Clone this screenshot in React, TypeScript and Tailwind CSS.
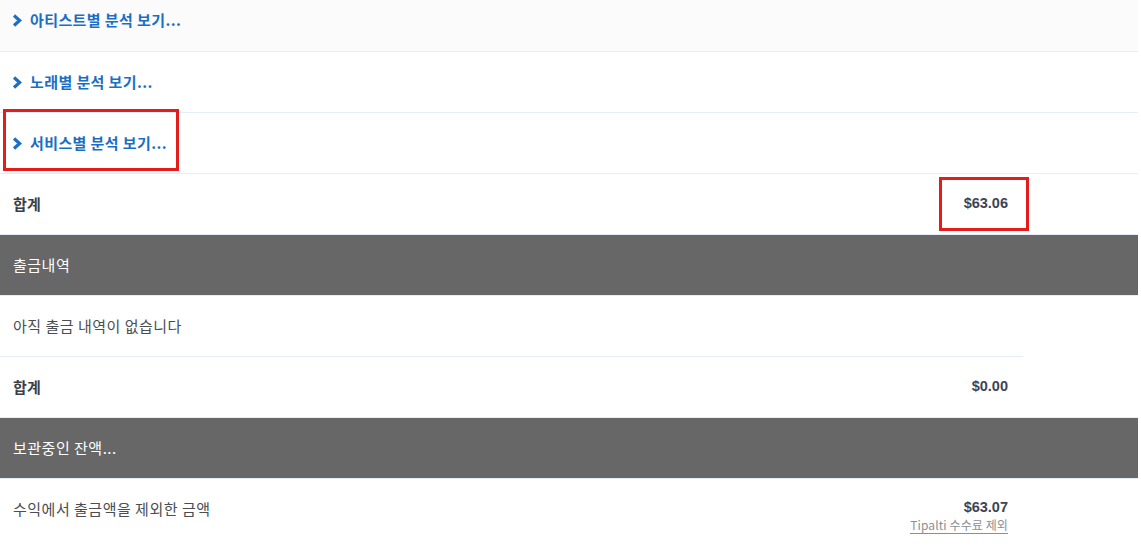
const kr = "font-['Noto_Sans_CJK_KR','Noto_Sans',sans-serif]";
const num = "font-['Liberation_Sans',Arial,sans-serif]";

function Chevron() {
  return (
    <svg width="10" height="13" viewBox="0 0 10 13" className="shrink-0">
      <path d="M2 1.5 L7.6 6.5 L2 11.5" fill="none" stroke="#1a6fc4" strokeWidth="3.2" strokeLinejoin="miter" />
    </svg>
  );
}

function LinkRow({ label, first }: { label: string; first?: boolean }) {
  return (
    <div
      className={
        "flex items-center border-b border-[#e4eef8] pl-[12px] gap-[8px] " +
        (first ? "h-[52px] pb-[11px] bg-[#fbfbfb]" : "h-[61px]")
      }
    >
      <Chevron />
      <span className={`${kr} text-[15px] font-bold text-[#1a6fc4] tracking-[0.4px]`}>{label}</span>
    </div>
  );
}

function TotalRow({ amount }: { amount: string }) {
  return (
    <div className="h-[61px] border-b border-[#e4eef8]">
      <div className="w-[1023px] h-full flex items-center justify-between pl-[13px] pr-[15px]">
        <span className={`${kr} text-[15px] font-semibold text-[#3a3f48] tracking-[0.3px]`}>합계</span>
        <span className={`${num} text-[14.5px] font-bold text-[#3d4452]`}>{amount}</span>
      </div>
    </div>
  );
}

function Header({ title }: { title: string }) {
  return (
    <div className="h-[61px] border-b border-[#e4eef8] bg-[#676767] flex items-center pl-[13px]">
      <span className={`${kr} text-[15px] text-white tracking-[0.5px]`}>{title}</span>
    </div>
  );
}

export default function App() {
  return (
    <div className="relative w-[1141px] h-[550px] overflow-hidden bg-white">
      <div className="w-[1138px]">
        <LinkRow label="아티스트별 분석 보기..." first />
        <LinkRow label="노래별 분석 보기..." />
        <LinkRow label="서비스별 분석 보기..." />
        <TotalRow amount="$63.06" />
        <Header title="출금내역" />
        <div className="w-[1023px] h-[61px] border-b border-[#e4eef8] flex items-center pl-[13px]">
          <span className={`${kr} text-[15px] text-[#4a4d53] tracking-[0.5px]`}>아직 출금 내역이 없습니다</span>
        </div>
        <TotalRow amount="$0.00" />
        <Header title="보관중인 잔액..." />
        <div className="w-[1023px] h-[61px] flex items-center justify-between pl-[13px] pr-[15px]">
          <span className={`${kr} text-[15px] text-[#4a4d53] tracking-[0.5px]`}>수익에서 출금액을 제외한 금액</span>
          <div className="flex flex-col items-end pt-[12px]">
            <span className={`${num} text-[14.5px] font-bold text-[#3d4452] leading-[18px]`}>$63.07</span>
            <span className={`${kr} text-[12px] text-[#8c8f94] leading-[17px] border-b border-[#8c8f94] tracking-[0.1px]`}>
              Tipalti 수수료 제외
            </span>
          </div>
        </div>
      </div>

      {/* annotation boxes */}
      <div className="absolute left-[3px] top-[109px] w-[176px] h-[62px] border-[3px] border-[#e51c1c]" />
      <div className="absolute left-[939px] top-[177px] w-[90px] h-[54px] border-[3px] border-[#e51c1c]" />
    </div>
  );
}
